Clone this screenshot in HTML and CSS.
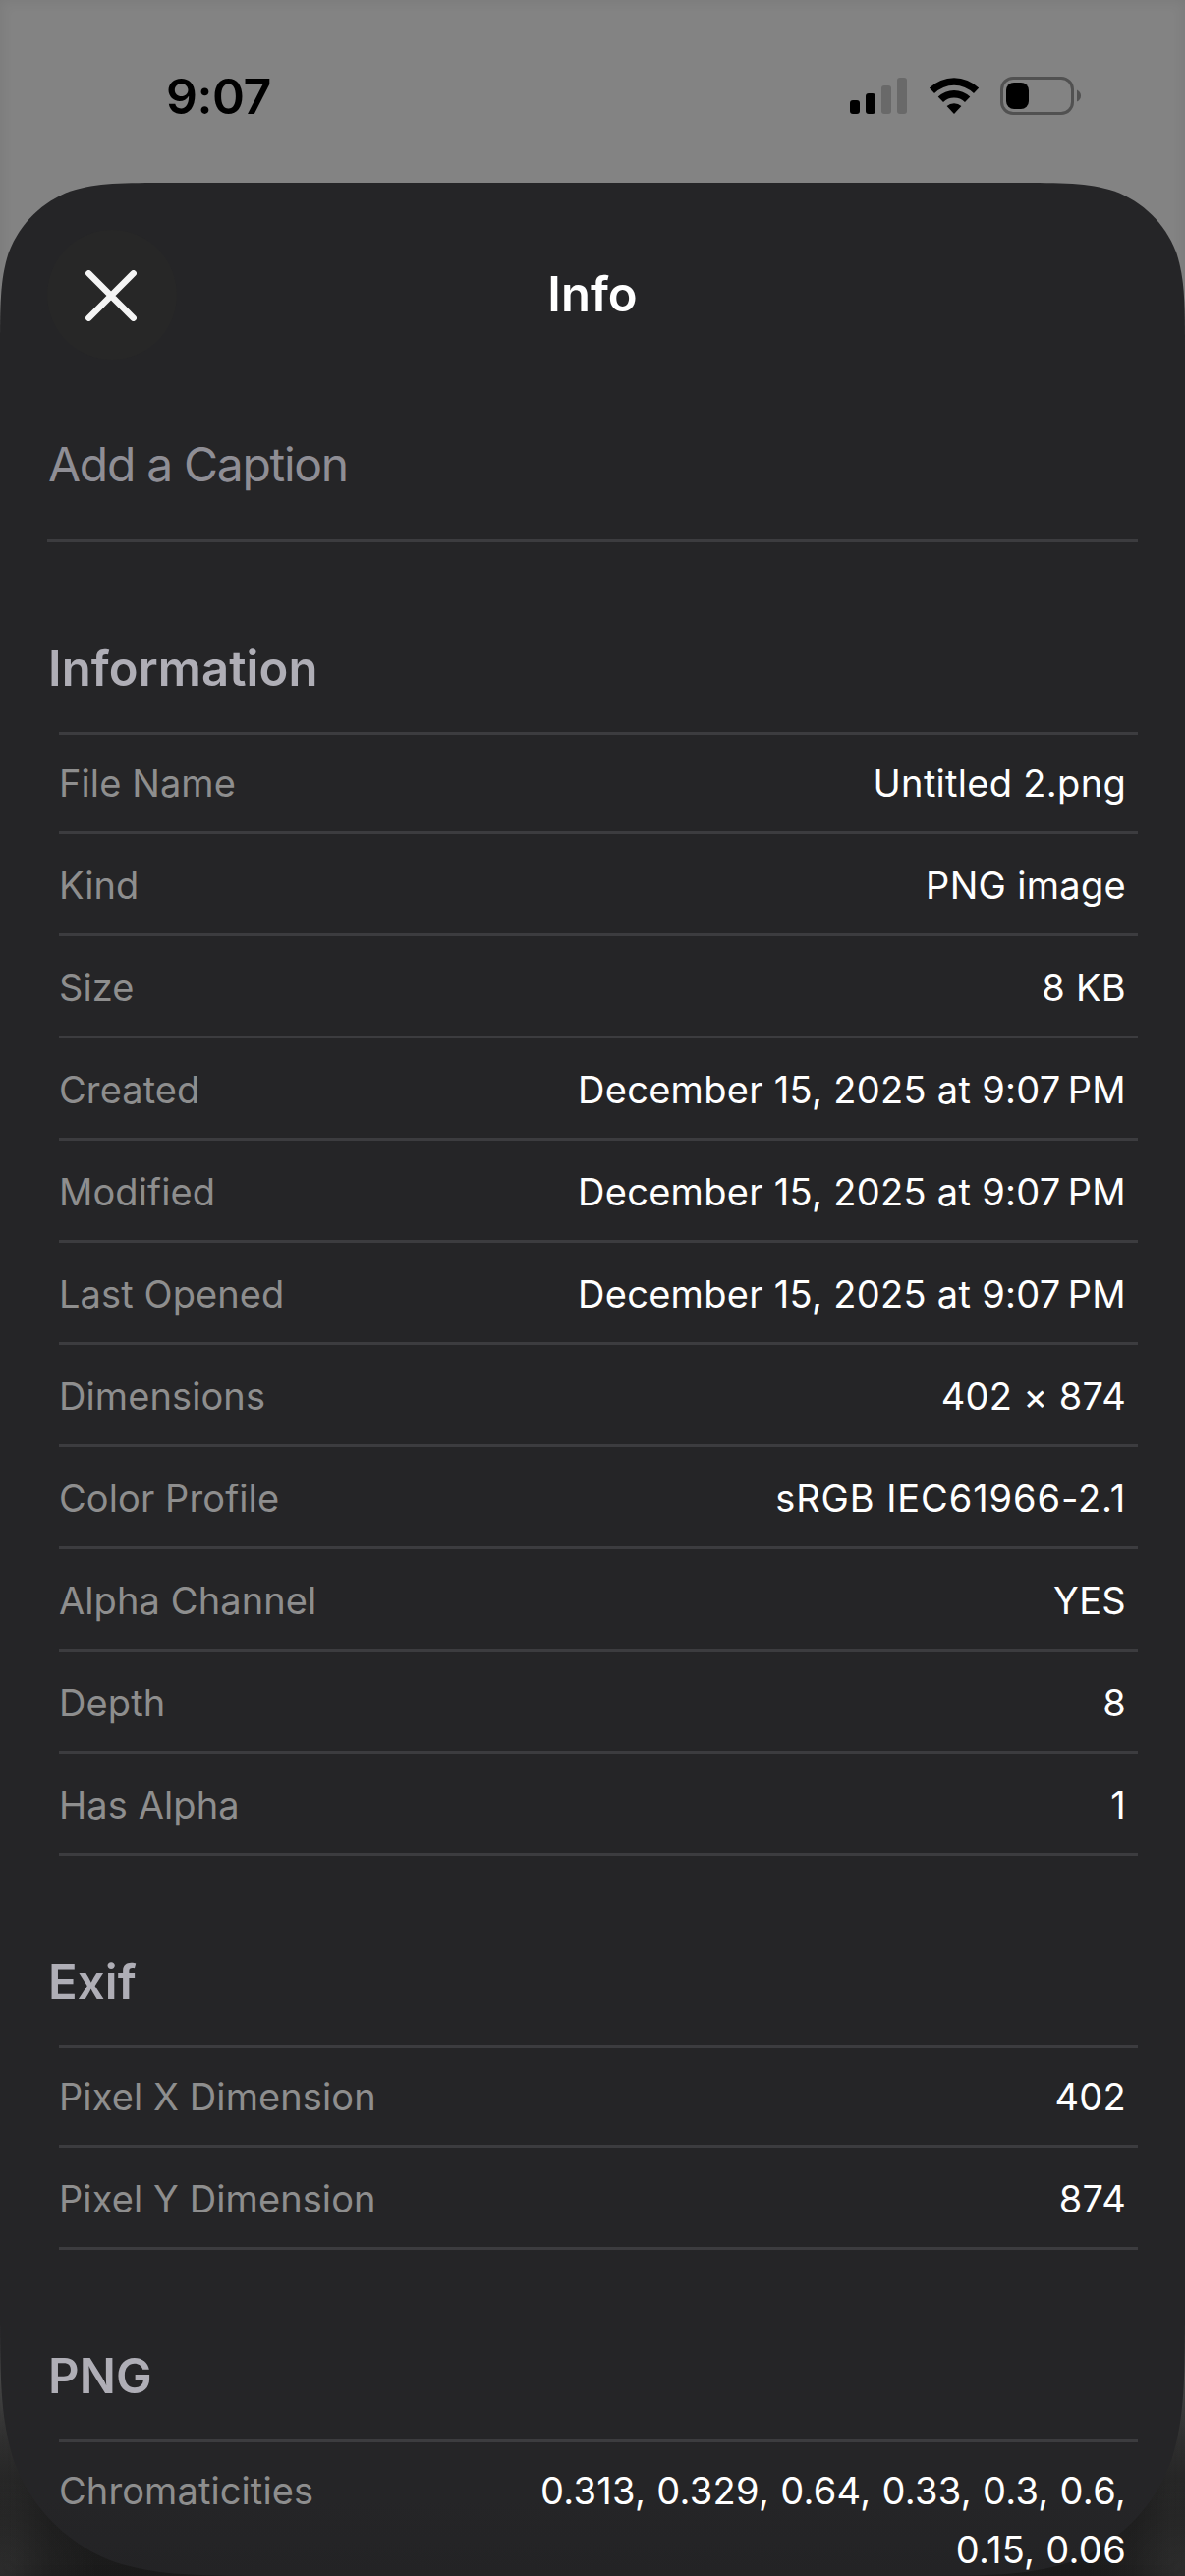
FILE: index.html
```
<!DOCTYPE html>
<html lang="en">

<head>
    <meta charset="utf-8">
    <meta name="viewport" content="width=device-width, initial-scale=1">
    <title>Info</title>
    <link rel="stylesheet" href="styles.css">
</head>

<body>
    <div class="screen">
        <header class="status-bar">
            <div class="time">9:07</div>
            <div class="status-icons">
                <svg class="signal" width="58" height="37" viewBox="0 0 58 37">
                    <rect x="0" y="23" width="10" height="14" rx="3" />
                    <rect x="16" y="16" width="10" height="21" rx="3" />
                    <rect class="dim" x="32" y="8" width="10" height="29" rx="3" />
                    <rect class="dim" x="48" y="0" width="10" height="37" rx="3" />
                </svg>
                <svg class="wifi" width="52" height="38" viewBox="0 0 52 38">
                    <path d="M.800 11.500a36 36 0 0 1 50.400 0L46 17a28.500 28.500 0 0 0-40 0Z" />
                    <path d="M9.700 20.600a23.500 23.500 0 0 1 32.600 0L37 26a16 16 0 0 0-22 0Z" />
                    <path d="M18.600 30a11 11 0 0 1 14.800 0L26 38Z" />
                </svg>
                <svg class="battery" width="82" height="39" viewBox="0 0 82 39">
                    <rect class="shell" x="1.500" y="1.500" width="72" height="36" rx="11.500" />
                    <rect x="6" y="6" width="23" height="27" rx="8" />
                    <path class="cap" d="M78 13.500q4 2 4 6t-4 6Z" />
                </svg>
            </div>
        </header>

        <main class="sheet">
            <div class="nav">
                <button class="close-btn" aria-label="Close">
                    <svg width="52" height="52" viewBox="0 0 52 52">
                        <path d="M3.300 3.300 48.700 48.700M48.700 3.300 3.300 48.700" />
                    </svg>
                </button>
                <h1>Info</h1>
            </div>

            <div class="caption">Add a Caption</div>

            <section class="group">
                <h2>Information</h2>
                <dl>
                    <div class="row"><dt>File Name</dt><dd>Untitled 2.png</dd></div>
                    <div class="row"><dt>Kind</dt><dd>PNG image</dd></div>
                    <div class="row"><dt>Size</dt><dd>8 KB</dd></div>
                    <div class="row"><dt>Created</dt><dd>December 15, 2025 at 9:07&#8239;PM</dd></div>
                    <div class="row"><dt>Modified</dt><dd>December 15, 2025 at 9:07&#8239;PM</dd></div>
                    <div class="row"><dt>Last Opened</dt><dd>December 15, 2025 at 9:07&#8239;PM</dd></div>
                    <div class="row"><dt>Dimensions</dt><dd>402 × 874</dd></div>
                    <div class="row"><dt>Color Profile</dt><dd class="profile">sRGB IEC61966-2.1</dd></div>
                    <div class="row"><dt>Alpha Channel</dt><dd>YES</dd></div>
                    <div class="row"><dt>Depth</dt><dd>8</dd></div>
                    <div class="row"><dt>Has Alpha</dt><dd>1</dd></div>
                </dl>
            </section>

            <section class="group">
                <h2>Exif</h2>
                <dl>
                    <div class="row"><dt>Pixel X Dimension</dt><dd>402</dd></div>
                    <div class="row"><dt>Pixel Y Dimension</dt><dd>874</dd></div>
                </dl>
            </section>

            <section class="group">
                <h2>PNG</h2>
                <dl>
                    <div class="row"><dt>Chromaticities</dt><dd>0.313, 0.329, 0.64, 0.33, 0.3, 0.6, 0.15, 0.06</dd></div>
                </dl>
            </section>
        </main>
    </div>
</body>

</html>
```
FILE: styles.css
```
* {
    box-sizing: border-box;
}

body {
    margin: 0;
    font-family: Inter, Roboto, "Liberation Sans", sans-serif;
    overflow: hidden;
}

h1,
h2,
dl,
dd {
    margin: 0;
}

.screen {
    height: 2622px;
    overflow: hidden;
    background:
        radial-gradient(circle at 0 100%, rgba(255, 255, 255, 0.05), transparent 100px),
        radial-gradient(circle at 100% 100%, rgba(255, 255, 255, 0.05), transparent 100px),
        linear-gradient(90deg, transparent, rgba(0, 0, 0, 0.22) 50px, rgba(0, 0, 0, 0.22) 1156px, transparent) 0 100% / 100% 180px no-repeat,
        linear-gradient(#838383 0, #838383 1900px, #606060 2345px, #474747 2422px, #323232 2480px, #292929 2520px, #242424 2560px, #232323 2622px);
    box-shadow: inset 0 0 14px rgba(0, 0, 0, 0.08);
}

.status-bar {
    display: flex;
    justify-content: space-between;
    height: 186px;
    padding: 78px 106px 0 169px;
}

.time {
    height: 39px;
    font-size: 50px;
    line-height: 40px;
    font-weight: 600;
    letter-spacing: -0.500px;
}

.status-icons {
    display: flex;
    align-items: flex-start;
}

.signal {
    margin: 1px 21.500px 0 0;
}

.signal .dim {
    fill: #696969;
}

.wifi {
    margin: 0 21.500px 0 0;
}

.battery .shell {
    fill: none;
    stroke: #515151;
    stroke-width: 3;
}

.battery .cap {
    fill: #515151;
}

.sheet {
    position: relative;
    z-index: 0;
    height: 2436px;
    padding: 48px 48px 0;
    overflow: hidden;
    color: #fff;
}

/* continuous corners: small on top, device radius at the bottom */
.sheet::before {
    content: "";
    position: absolute;
    inset: 0;
    z-index: -1;
    background: linear-gradient(#252527 2360px, #232325);
    clip-path: path("M0 174.300C0 124.100 0 99 8.500 72C19.300 42.500 42.500 19.300 72 8.500C99 0 124.100 0 174.300 0H1031.700C1081.900 0 1107 0 1134 8.500C1163.500 19.300 1186.700 42.500 1197.500 72C1206 99 1206 124.100 1206 174.300V2151.700C1206 2233.500 1206 2274.500 1192.100 2318.500C1174.600 2366.700 1136.700 2404.600 1088.500 2422.100C1044.500 2436 1003.500 2436 921.700 2436H284.300C202.500 2436 161.500 2436 117.500 2422.100C69.300 2404.600 31.400 2366.700 13.900 2318.500C0 2274.500 0 2233.500 0 2151.700Z");
}

.nav {
    display: grid;
    grid-template-columns: 132px 1fr 132px;
    align-items: center;
    height: 132px;
}

.nav h1 {
    font-size: 49px;
    line-height: 60px;
    font-weight: 600;
    text-align: center;
}

.close-btn {
    display: flex;
    align-items: center;
    justify-content: center;
    width: 132px;
    height: 132px;
    padding: 2px 2px 0 0;
    border: none;
    border-radius: 50%;
    background: #272727;
}

.close-btn path {
    stroke: #f4f4f4;
    stroke-width: 6.500;
    stroke-linecap: round;
}

.caption {
    height: 186px;
    padding: 77px 0 0 1px;
    border-bottom: 3px solid #3c3c3f;
    color: #8f8e95;
    font-size: 48px;
    line-height: 60px;
    letter-spacing: -1.300px;
}

.group h2 {
    height: 193px;
    padding: 99px 0 0 1px;
    color: #afaeb6;
    font-size: 49px;
    line-height: 60px;
    font-weight: 600;
    letter-spacing: 0.100px;
}

.group dl {
    margin-left: 12px;
    border-top: 3px solid #3c3c3f;
}

.row {
    display: flex;
    justify-content: space-between;
    padding: 22px 12px 19px 0;
    border-bottom: 3px solid #3c3c3f;
    font-size: 38px;
    line-height: 60px;
}

.row:first-child {
    padding-top: 19px;
}

.row dt {
    color: #8e8e8e;
    letter-spacing: 0.100px;
}

.row dd {
    max-width: 620px;
    text-align: right;
    letter-spacing: 0.300px;
}

.row .profile {
    letter-spacing: 0.900px;
}
```
